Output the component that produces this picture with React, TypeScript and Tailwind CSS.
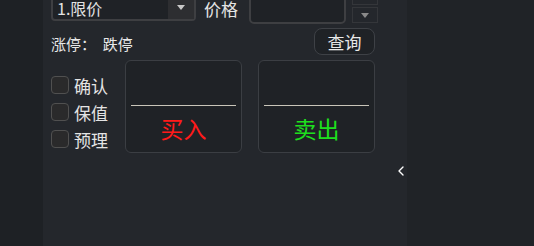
import { ChevronLeft } from "lucide-react";

const font = { fontFamily: '"Noto Sans CJK SC", "Noto Sans", sans-serif' };

function Check({ label }: { label: string }) {
    return (
        <label className="flex items-center gap-[5px] h-[18px]">
            <span className="block size-[18px] rounded-[4px] border border-[#505050] bg-[#2a2a2b]" />
            <span className="text-[17px] leading-none text-[#e4e4e4]">{label}</span>
        </label>
    );
}

function TradeBox({ label, color }: { label: string; color: string }) {
    return (
        <div className="w-[117px] h-[93px] rounded-[6px] border border-[#3b3e43] bg-[#1f2226] flex flex-col px-[5px]">
            <div className="h-[45px] border-b border-[#c9c5b9]" />
            <div className={`flex-1 flex items-center justify-center text-[23px] leading-none pb-[1px] ${color}`}>{label}</div>
        </div>
    );
}

export default function App() {
    return (
        <div className="w-[534px] h-[246px] flex bg-[#202327] overflow-hidden" style={font}>
            <div className="w-[43px] bg-[#1e2125]" />
            <div className="w-[364px] bg-[#24272c] relative pl-[8px]">
                <div className="flex items-start mt-[-8px]">
                    <div className="mt-[1px] w-[145px] h-[28px] rounded-[4px] border-2 border-[#3e3f42] bg-[#1f2226] flex">
                        <span className="flex-1 pl-[4px] pt-[5px] text-[16px] leading-none text-[#e4e4e4]">1.限价</span>
                        <span className="w-[26px] bg-[#2d2e31] flex items-center justify-center">
                            <span className="block w-0 h-0 border-l-[4px] border-r-[4px] border-t-[5px] border-l-transparent border-r-transparent border-t-[#c8c8c8]" />
                        </span>
                    </div>
                    <span className="ml-[8px] mt-[8px] text-[17px] leading-none text-[#e4e4e4]">价格</span>
                    <div className="ml-[11px] w-[97px] h-[32px] rounded-[5px] border-2 border-[#3e3f42] bg-[#1f2226]" />
                    <div className="ml-[6px] w-[26px] flex flex-col gap-[2px]">
                        <div className="h-[13px] border border-[#34363a]" />
                        <div className="h-[16px] border border-[#34363a] flex items-center justify-center">
                            <span className="block w-0 h-0 border-l-[4px] border-r-[4px] border-t-[5px] border-l-transparent border-r-transparent border-t-[#8a8a8a]" />
                        </div>
                    </div>
                </div>
                <div className="flex items-center justify-between mt-[4px] pr-[32px] h-[27px]">
                    <span className="text-[15px] leading-none text-[#e8e8e8] mt-[4px]">涨停：&nbsp;&nbsp;跌停</span>
                    <button className="w-[61px] h-[27px] rounded-[8px] border border-[#3e4146] bg-[#1f2226] text-[17px] leading-none text-[#e8e8e8]">查询</button>
                </div>
                <div className="flex items-start mt-[5px]">
                    <div className="flex flex-col gap-[9px] mt-[16px] w-[74px]">
                        <Check label="确认" />
                        <Check label="保值" />
                        <Check label="预理" />
                    </div>
                    <TradeBox label="买入" color="text-[#ff1a1a]" />
                    <div className="w-[16px]" />
                    <TradeBox label="卖出" color="text-[#1ee01e]" />
                </div>
                <ChevronLeft className="absolute left-[350px] top-[163px] size-[16px] text-white" strokeWidth={2} />
            </div>
            <div className="flex-1 bg-[#202327]" />
        </div>
    );
}
